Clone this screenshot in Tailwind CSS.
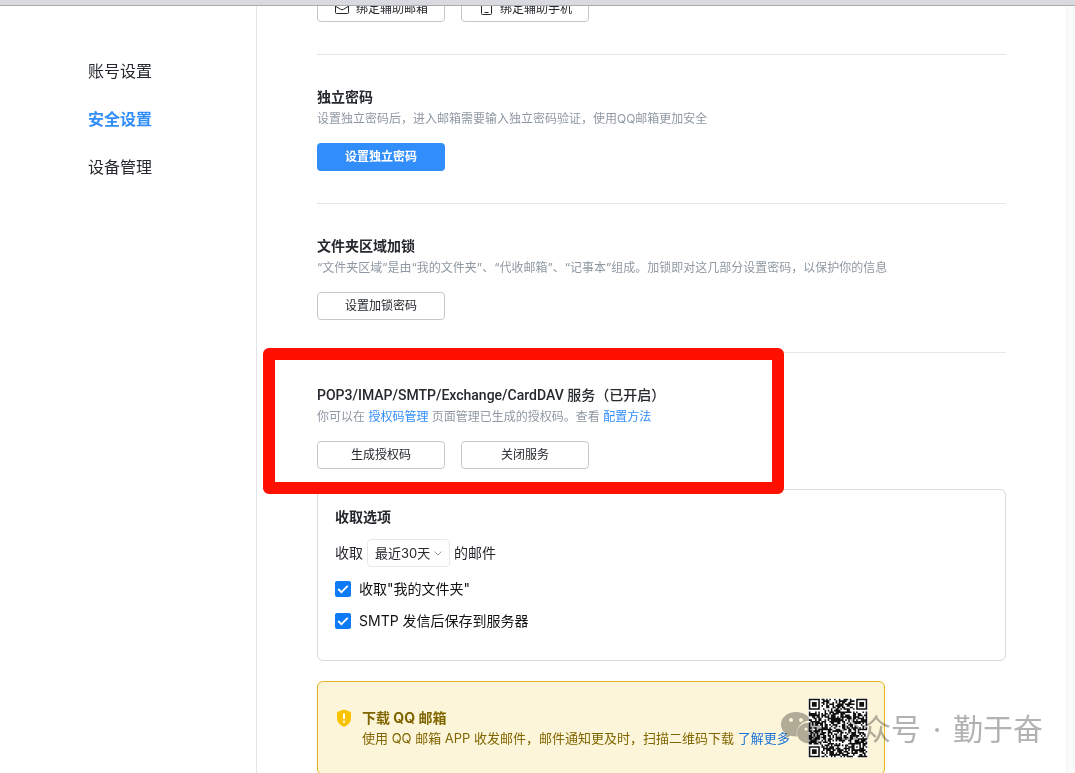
<!DOCTYPE html>
<html lang="zh-CN">
<head>
  <meta charset="UTF-8">
  <meta name="viewport" content="width=device-width, initial-scale=1.0">
  <title>QQ邮箱 - 安全设置</title>
  <script src="https://cdn.jsdelivr.net/npm/@tailwindcss/browser@4"></script>
</head>
<body class="relative flex h-screen flex-col overflow-hidden bg-white font-['Inter','Noto_Sans_CJK_SC',sans-serif] text-[#25282c]">
  <header class="h-[6px] shrink-0 border-b border-[#acacb0] bg-[#d9dae0]"></header>

  <div class="flex min-h-0 flex-1">
    <!-- Menú lateral -->
    <nav class="flex w-[257px] shrink-0 flex-col gap-6 border-r border-[#e4e5e9] pt-[53px] pl-22 text-base leading-6">
      <a href="#account">账号设置</a>
      <a href="#security" class="font-bold text-[#318dfa]">安全设置</a>
      <a href="#devices">设备管理</a>
    </nav>

    <main class="min-w-0 flex-1 overflow-hidden px-[60px]">
      <div class="-mt-3 flex gap-4 pb-8">
        <button class="flex h-7 w-32 items-center justify-center gap-1.5 rounded border border-[#c6c7c9] pt-0.5 text-xs">
          <svg class="h-4 w-4" viewBox="0 0 16 16" fill="none" stroke="currentColor"><rect x="1.5" y="2.5" width="13" height="10" rx="1"/><path d="M2 5.500l4.500 2.800q1.500.8 3 0L14 5.500"/></svg>
          绑定辅助邮箱
        </button>
        <button class="flex h-7 w-32 items-center justify-center gap-1.5 rounded border border-[#c6c7c9] pt-0.5 text-xs">
          <svg class="h-4 w-4" viewBox="0 0 16 16" fill="none" stroke="currentColor"><rect x="3.500" y="0.500" width="10" height="13" rx="1"/><path d="M6.500 11.500h4"/></svg>
          绑定辅助手机
        </button>
      </div>

      <section class="border-t border-[#e5e6e8] py-8">
        <h2 class="text-sm leading-5 font-bold">独立密码</h2>
        <p class="mt-0.5 text-xs leading-5 text-[#8f98a2]">设置独立密码后，进入邮箱需要输入独立密码验证，使用QQ邮箱更加安全</p>
        <button class="mt-3.5 block h-7 w-32 rounded bg-[#318dfa] text-xs font-bold text-white">设置独立密码</button>
      </section>

      <section class="border-t border-[#e5e6e8] py-8">
        <h2 class="text-sm leading-5 font-bold">文件夹区域加锁</h2>
        <p class="mt-0.5 text-xs leading-5 text-[#8f98a2]">“文件夹区域”是由“我的文件夹”、“代收邮箱”、“记事本”组成。加锁即对这几部分设置密码，以保护你的信息</p>
        <button class="mt-3.5 block h-7 w-32 rounded border border-[#c6c7c9] text-xs">设置加锁密码</button>
      </section>

      <section class="relative border-t border-[#e5e6e8] pt-8">
        <h2 class="font-['Roboto','Noto_Sans_CJK_SC',sans-serif] text-sm leading-5 font-medium">POP3/IMAP/SMTP/Exchange/CardDAV 服务（已开启）</h2>
        <p class="mt-0.5 text-xs leading-5 text-[#8f98a2]">你可以在 <a href="#auth" class="text-[#318dfa]">授权码管理</a> 页面管理已生成的授权码。查看 <a href="#help" class="text-[#318dfa]">配置方法</a></p>
        <div class="mt-3.5 flex gap-4">
          <button class="h-7 w-32 rounded border border-[#c6c7c9] text-xs">生成授权码</button>
          <button class="h-7 w-32 rounded border border-[#c6c7c9] text-xs">关闭服务</button>
        </div>

        <div class="mt-5 rounded-md border border-[#d9dadc] px-[17px] pt-[17px] pb-[29px] text-sm leading-5">
          <h3 class="font-bold">收取选项</h3>
          <div class="mt-3 flex items-center gap-1">
            <label for="range">收取</label>
            <span class="relative">
              <select id="range" class="block h-7 w-[83px] appearance-none rounded border border-[#e8e9eb] bg-white pl-[7px] text-[13px]">
                <option>最近30天</option>
                <option>全部</option>
              </select>
              <svg class="pointer-events-none absolute top-2.5 right-2 h-2 w-2" viewBox="0 0 8 8" fill="none" stroke="#999ea5"><path d="M.5 2.500L4 6l3.500-3.500"/></svg>
            </span>
            <span>的邮件</span>
          </div>
          <label class="mt-3 flex items-center gap-2 text-[#101214]">
            <span class="grid">
              <input type="checkbox" checked class="col-start-1 row-start-1 h-4 w-4 appearance-none rounded-xs bg-[#0f7af5]">
              <svg class="pointer-events-none col-start-1 row-start-1 h-4 w-4" viewBox="0 0 16 16" fill="none" stroke="white" stroke-width="1.800"><path d="M3.200 8l3.200 3.200 6.400-6.400"/></svg>
            </span>
            收取"我的文件夹"
          </label>
          <label class="mt-3 flex items-center gap-2 text-[#101214]">
            <span class="grid">
              <input type="checkbox" checked class="col-start-1 row-start-1 h-4 w-4 appearance-none rounded-xs bg-[#0f7af5]">
              <svg class="pointer-events-none col-start-1 row-start-1 h-4 w-4" viewBox="0 0 16 16" fill="none" stroke="white" stroke-width="1.800"><path d="M3.200 8l3.200 3.200 6.400-6.400"/></svg>
            </span>
            SMTP 发信后保存到服务器
          </label>
        </div>

        <!-- Recuadro rojo sobre la sección -->
        <div class="pointer-events-none absolute -top-[5px] -left-[54px] h-[146px] w-[521px] rounded-md border-12 border-[#ff1000]"></div>
      </section>

      <aside class="mt-5 flex max-w-[568px] items-center justify-between rounded-md border border-[#e0b41c] bg-[#fdf5d9] p-4 text-[#806600]">
        <div class="flex gap-2">
          <svg class="h-5 w-5" viewBox="0 0 20 20"><path d="M10 1.500l7 2.500v6.500q0 5.500-7 8.500-7-3-7-8.500V4z" fill="#f9c300"/><path d="M10 5.500v5.500M10 12.800v2" stroke="#fff" stroke-width="2"/></svg>
          <div class="text-[13px] leading-5">
            <h3 class="text-sm leading-5 font-bold">下载 QQ 邮箱</h3>
            <p class="whitespace-nowrap">使用 QQ 邮箱 APP 收发邮件，邮件通知更及时，扫描二维码下载 <a href="#more" class="text-[#1c74d9]">了解更多</a></p>
          </div>
        </div>
        <svg id="qr" class="h-[60px] w-[60px] shrink-0 bg-white" viewBox="-0.500 -0.500 38 38" role="img" aria-label="二维码"></svg>
      </aside>
    </main>

    <div class="w-[9px] shrink-0 border-l border-[#f5f5f5] bg-[#fafafa]"></div>
  </div>

  <!-- Marca de agua -->
  <div class="pointer-events-none absolute right-8 bottom-6 flex items-center text-[30px] leading-10 text-[#b2b2b2] mix-blend-multiply">
    <svg class="h-10 w-[50px]" viewBox="0 0 50 40" fill="currentColor">
      <path fill-rule="evenodd" d="M15 3C6.500 3 0 8.500 0 15.500c0 4 2 7.300 5.500 9.500L4 29.500l5.500-2.800q3 .8 6.500.8C14 19 21 11.500 29.500 11.500 28 6.500 22 3 15 3zM10 9a2 2 0 1 1 0 4 2 2 0 0 1 0-4zm10 0a2 2 0 1 1 0 4 2 2 0 0 1 0-4z"/>
      <path fill-rule="evenodd" d="M29 13.500c-7.500 0-13 4.500-13 10.500s5.500 10.500 13 10.500q2.500 0 5-.7l4.500 2.400-1.200-4c3-2 4.700-4.900 4.700-8.200 0-6-5.500-10.500-13-10.500zM25 18.500a1.600 1.600 0 1 1 0 3.200 1.600 1.600 0 0 1 0-3.200zm8.500 0a1.600 1.600 0 1 1 0 3.200 1.600 1.600 0 0 1 0-3.200z"/>
    </svg>
    <span>公众号</span>
    <span class="w-8 text-center">·</span>
    <span>勤于奋</span>
  </div>

  <script>
    // Código QR de 37 x 37 módulos
    const n = 37;
    let seed = 20;
    let d = '';
    function finder(x, y) {
      return `M${x} ${y}h7v7h-7zM${x + 1} ${y + 1}v5h5v-5zM${x + 2} ${y + 2}h3v3h-3z`;
    }
    for (let y = 0; y < n; y++) {
      for (let x = 0; x < n; x++) {
        seed = (seed * 1103515245 + 12345) % 2147483648;
        const corner = (x < 8 && y < 8) || (x > 28 && y < 8) || (x < 8 && y > 28);
        const align = x > 27 && x < 33 && y > 27 && y < 33;
        if (!corner && !align && seed / 2147483648 < 0.58) d += `M${x} ${y}h1v1h-1z`;
      }
    }
    d += finder(0, 0) + finder(30, 0) + finder(0, 30);
    // los cuadros interiores se dibujan aparte para no anular el relleno
    d += 'M28 28h5v5h-5zM29 29v3h3v-3zM30 30h1v1h-1z';
    document.getElementById('qr').innerHTML = `<path d="${d}" fill="#111" fill-rule="evenodd"/>`;
  </script>
</body>
</html>
